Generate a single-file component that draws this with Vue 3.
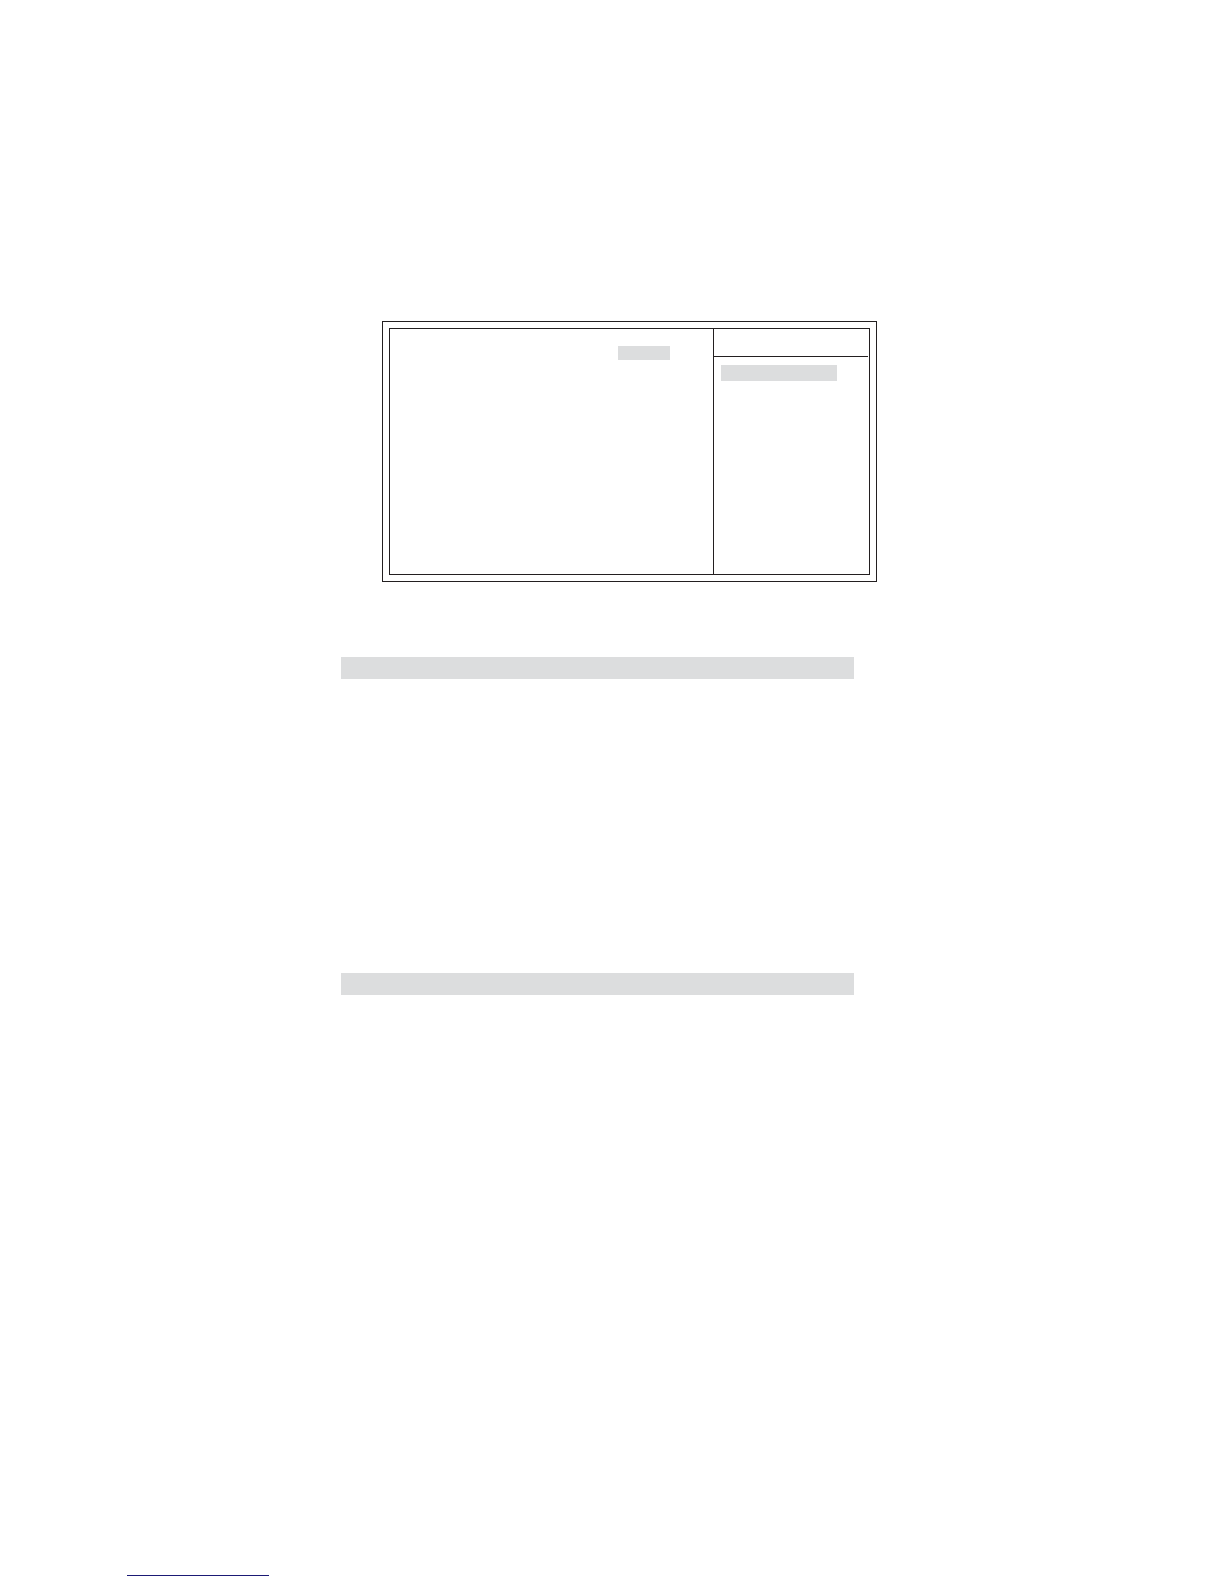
<template>
  <main class="page">
    <section class="setup-screen">
      <div class="setup-inner">
        <div class="settings-pane">
          <div class="selected-value"></div>
        </div>
        <aside class="help-pane">
          <div class="help-header"></div>
          <div class="help-highlight"></div>
        </aside>
      </div>
    </section>

    <section v-for="name in sections" :key="name" class="manual-section">
      <div class="section-bar"></div>
    </section>

    <footer class="page-footer">
      <div class="footer-line"></div>
    </footer>
  </main>
</template>

<script setup>
const sections = ['first', 'second'];
</script>

<style>
body {
  margin: 0;
  background-color: #ffffff;
}
</style>

<style scoped>
.page {
  box-sizing: border-box;
  display: flex;
  flex-direction: column;
  min-height: 100vh;
  padding: 321px 127px 8px;
}

.setup-screen {
  box-sizing: border-box;
  width: 100%;
  max-width: 495px;
  margin-left: 255px;
  margin-bottom: 75px;
  padding: 6px;
  border: 1px solid #231f20;
}

.setup-inner {
  display: grid;
  grid-template-columns: 1fr 156px;
  min-height: 245px;
  border: 1px solid #231f20;
}

.settings-pane {
  display: flex;
  justify-content: flex-end;
  align-items: flex-start;
  padding: 17px 43px 0 0;
}

.selected-value {
  width: 52px;
  height: 14px;
  background-color: #dcddde;
}

.help-pane {
  border-left: 1px solid #231f20;
}

.help-header {
  height: 27px;
  margin-right: 1px;
  border-bottom: 1px solid #231f20;
}

.help-highlight {
  height: 16px;
  margin: 8px 32px 0 7px;
  background-color: #dcddde;
}

.manual-section {
  width: 100%;
  max-width: 513px;
  min-height: 316px;
  margin-left: 214px;
}

.section-bar {
  height: 22px;
  background-color: #dcddde;
}

.page-footer {
  margin-top: auto;
}

.footer-line {
  width: 142px;
  height: 1px;
  background-color: #1b1a75;
}
</style>
